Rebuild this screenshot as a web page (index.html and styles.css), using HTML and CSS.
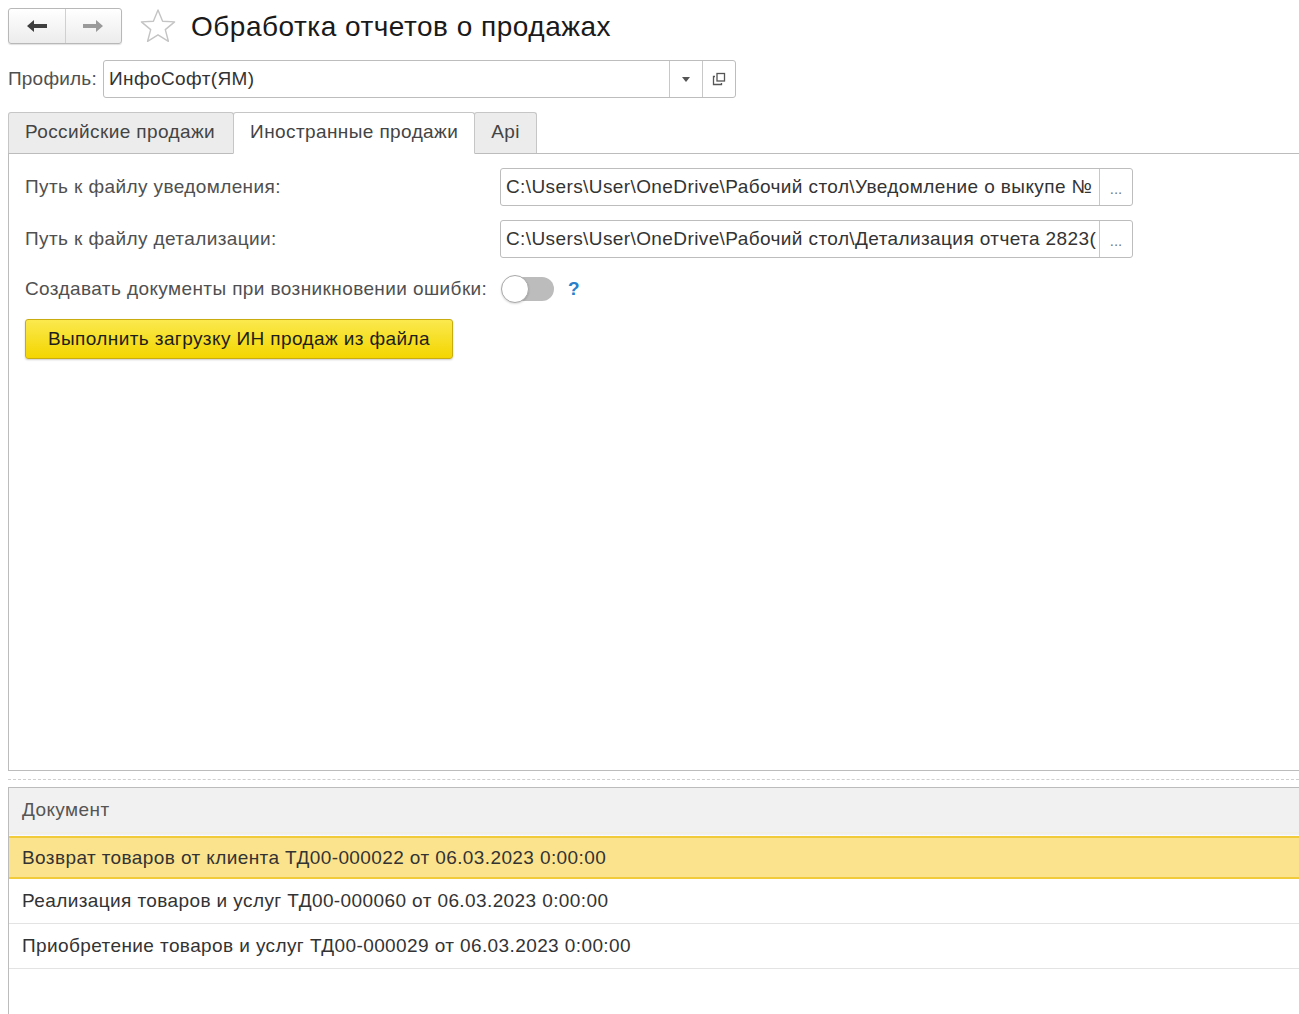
FILE: index.html
```html
<!DOCTYPE html>
<html lang="ru">
<head>
<meta charset="utf-8">
<title>Обработка отчетов о продажах</title>
<link rel="stylesheet" href="styles.css">
</head>
<body>
<div class="page">
  <div class="topbar">
    <div class="navgroup">
      <button class="navbtn">
        <svg width="22" height="14" viewBox="0 0 22 14"><path d="M1 7 L8 1 L8 5 L21 5 L21 9 L8 9 L8 13 Z" fill="#3f3f3f"/></svg>
      </button>
      <button class="navbtn">
        <svg width="22" height="14" viewBox="0 0 22 14"><path d="M21 7 L14 1 L14 5 L1 5 L1 9 L14 9 L14 13 Z" fill="#9a9a9a"/></svg>
      </button>
    </div>
    <svg class="star" width="38" height="36" viewBox="0 0 38 36"><path d="M19 2 L23.6 13.2 L35.6 13.9 L26.3 21.6 L29.4 33.3 L19 26.8 L8.6 33.3 L11.7 21.6 L2.4 13.9 L14.4 13.2 Z" fill="none" stroke="#c4c4c4" stroke-width="1.4" stroke-linejoin="round"/></svg>
    <h1 class="title">Обработка отчетов о продажах</h1>
  </div>

  <div class="profile">
    <span class="label">Профиль:</span>
    <div class="field profile-field">
      <span class="field-text">ИнфоСофт(ЯМ)</span>
      <span class="fbtn drop"><svg width="8" height="5" viewBox="0 0 8 5"><path d="M0 0 L8 0 L4 5 Z" fill="#555"/></svg></span>
      <span class="fbtn open"><svg width="14" height="14" viewBox="0 0 14 14"><rect x="5" y="1.5" width="7.5" height="7.5" fill="none" stroke="#555" stroke-width="1.3"/><path d="M3 4.5 L1.5 4.5 L1.5 12.5 L9.5 12.5 L9.5 11" fill="none" stroke="#555" stroke-width="1.3"/></svg></span>
    </div>
  </div>

  <div class="tabs">
    <div class="tab first">Российские продажи</div>
    <div class="tab active">Иностранные продажи</div>
    <div class="tab">Api</div>
    <div class="tab-fill"></div>
  </div>

  <div class="panel">
    <div class="form">
      <span class="label">Путь к файлу уведомления:</span>
      <div class="field path-field">
        <span class="field-text">C:\Users\User\OneDrive\Рабочий стол\Уведомление о выкупе №</span>
        <span class="fbtn dots">...</span>
      </div>
      <span class="label">Путь к файлу детализации:</span>
      <div class="field path-field">
        <span class="field-text">C:\Users\User\OneDrive\Рабочий стол\Детализация отчета 2823(</span>
        <span class="fbtn dots">...</span>
      </div>
      <span class="label toggle-label">Создавать документы при возникновении ошибки:</span>
      <div class="toggle-cell">
        <span class="toggle"><span class="knob"></span></span>
        <span class="help">?</span>
      </div>
    </div>
    <button class="yellow-btn">Выполнить загрузку ИН продаж из файла</button>
  </div>

  <div class="splitter"><div class="dash"></div></div>

  <div class="table">
    <div class="thead">Документ</div>
    <div class="thead-gap"></div>
    <div class="row selected">Возврат товаров от клиента ТД00-000022 от 06.03.2023 0:00:00</div>
    <div class="row">Реализация товаров и услуг ТД00-000060 от 06.03.2023 0:00:00</div>
    <div class="row">Приобретение товаров и услуг ТД00-000029 от 06.03.2023 0:00:00</div>
  </div>
</div>
</body>
</html>
```

FILE: styles.css
```css
* { box-sizing: border-box; }
html, body {
  margin: 0;
  padding: 0;
  background: #fff;
  overflow: hidden;
}
body {
  font-family: "Liberation Sans", Arial, sans-serif;
  font-size: 19px;
  letter-spacing: 0.4px;
  color: #333;
}
.page {
  padding: 8px 0 0 8px;
  height: 1014px;
  display: flex;
  flex-direction: column;
}
.topbar {
  display: flex;
  align-items: center;
  height: 36px;
}
.navgroup {
  display: flex;
  width: 114px;
  height: 36px;
  border: 1px solid #b8b8b8;
  border-radius: 3px;
  background: linear-gradient(#ffffff, #ececec);
  box-shadow: 0 1px 1px rgba(0,0,0,0.12);
}
.navbtn {
  flex: 1;
  border: none;
  background: transparent;
  padding: 0;
  display: flex;
  align-items: center;
  justify-content: center;
}
.navbtn + .navbtn { border-left: 1px solid #d0d0d0; }
.star { margin-left: 17px; }
.title {
  margin: 0 0 0 14px;
  font-size: 28px;
  letter-spacing: 0.5px;
  font-weight: normal;
  color: #1a1a1a;
  line-height: 36px;
  position: relative;
  top: 1px;
}
.profile {
  display: flex;
  align-items: center;
  margin-top: 16px;
  height: 38px;
}
.label { color: #505050; white-space: nowrap; }
.profile .label { width: 95px; letter-spacing: 0.2px; }
.field {
  display: flex;
  align-items: stretch;
  border: 1px solid #bdbdbd;
  border-radius: 3px;
  background: #fff;
  overflow: hidden;
}
.field-text {
  flex: 1;
  min-width: 0;
  white-space: nowrap;
  overflow: hidden;
  padding: 0 5px;
  display: flex;
  align-items: center;
  color: #333;
}
.fbtn {
  width: 33px;
  flex: none;
  border-left: 1px solid #c8c8c8;
  display: flex;
  align-items: center;
  justify-content: center;
  color: #777;
  font-size: 15px;
  letter-spacing: 0;
  padding-top: 3px;
}
.fbtn.drop, .fbtn.open { padding-top: 0; }
.profile-field { width: 633px; height: 38px; }
.tabs {
  display: flex;
  margin-top: 14px;
  height: 42px;
  align-items: flex-end;
}
.tab {
  height: 42px;
  padding: 0 16px 2px;
  display: flex;
  align-items: center;
  background: #ececec;
  border: 1px solid #c6c6c6;
  border-bottom: 1px solid #bcbcbc;
  border-radius: 3px 3px 0 0;
  color: #444;
  margin-right: -1px;
  white-space: nowrap;
}
.tab.first { padding: 0 18px 2px 16px; }
.tab.active {
  background: #fff;
  border-bottom-color: #fff;
  position: relative;
  z-index: 1;
}
.tab-fill {
  flex: 1;
  border-bottom: 1px solid #bcbcbc;
  height: 1px;
}
.panel {
  height: 618px;
  border-left: 1px solid #bcbcbc;
  border-bottom: 1px solid #bcbcbc;
  padding: 15px 0 0 16px;
  margin-top: -1px;
}
.form {
  display: grid;
  grid-template-columns: 475px 633px;
  row-gap: 14px;
  align-items: center;
}
.path-field { height: 38px; }
.toggle-label { margin-top: 3px; }
.toggle-cell {
  display: flex;
  align-items: center;
  height: 28px;
  margin-top: 3px;
  padding-left: 2px;
}
.toggle {
  width: 52px;
  height: 24px;
  border-radius: 12px;
  background: #bcbcbc;
  position: relative;
}
.knob {
  position: absolute;
  left: -1px;
  top: -2px;
  width: 28px;
  height: 28px;
  border-radius: 50%;
  background: #fff;
  border: 1px solid #a9a9a9;
  box-shadow: 0 1px 2px rgba(0,0,0,0.15);
}
.help {
  margin-left: 14px;
  color: #2b7fc9;
  font-weight: bold;
  font-size: 19px;
}
.yellow-btn {
  margin-top: 16px;
  width: 428px;
  height: 40px;
  font-family: inherit;
  font-size: 19px;
  letter-spacing: 0.4px;
  color: #1e1e1e;
  background: linear-gradient(#fbe94e, #f3d600);
  border: 1px solid #c9ad10;
  border-radius: 3px;
  box-shadow: 0 1px 2px rgba(0,0,0,0.2);
  padding: 0;
  display: block;
}
.splitter {
  height: 16px;
  display: flex;
  align-items: center;
}
.dash {
  flex: 1;
  border-top: 1px dashed #cfcfcf;
}
.table {
  flex: 1;
  border-left: 1px solid #bcbcbc;
  border-top: 1px solid #bcbcbc;
}
.thead {
  height: 44px;
  background: #f1f1f1;
  padding-left: 13px;
  display: flex;
  align-items: center;
  color: #555;
}
.thead-gap {
  height: 4px;
  background: linear-gradient(#f3f0e0, #eef0f6 60%, #fff);
}
.row {
  height: 45px;
  padding-left: 13px;
  display: flex;
  align-items: center;
  border-bottom: 1px solid #e3e3e3;
  color: #333;
}
.row.selected {
  height: 43px;
  background: #fbe38e;
  border-top: 2px solid #f2cb3a;
  border-bottom: 2px solid #f2cb3a;
}
```
